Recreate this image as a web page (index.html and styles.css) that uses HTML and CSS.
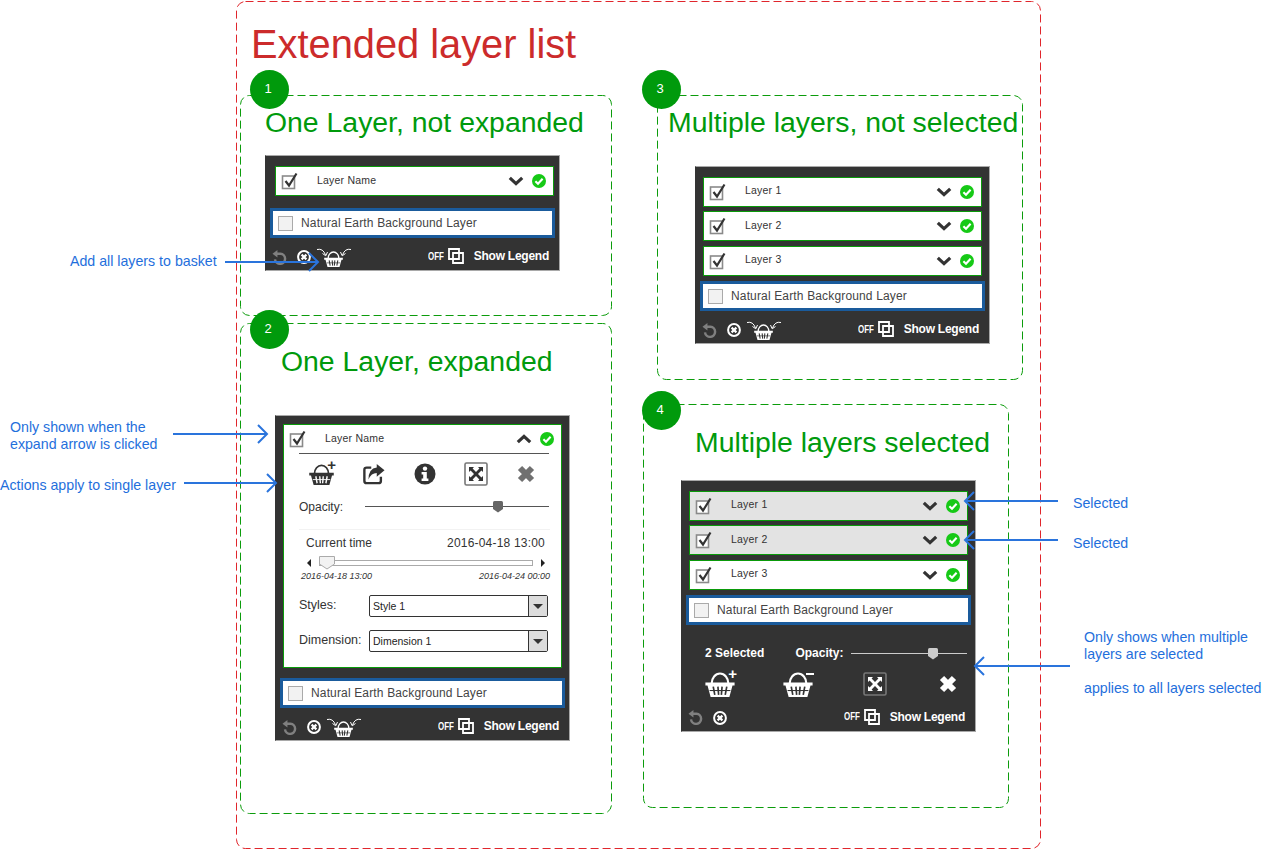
FILE: index.html
```html
<!DOCTYPE html>
<html lang="en">
<head>
  <meta charset="UTF-8">
  <title>Extended layer list</title>
  <link rel="stylesheet" href="styles.css">
</head>
<body>
  <svg class="defs" width="0" height="0">
    <symbol id="i-check" viewBox="0 0 18 18">
      <rect x="1.5" y="4" width="12" height="12.5" fill="#fff" stroke="#8a8a8a" stroke-width="1.6"/>
      <path d="M4.5 9 L8 13.5 L15.5 1.5" fill="none" stroke="#333" stroke-width="2.2"/>
    </symbol>
    <symbol id="i-down" viewBox="0 0 16 10">
      <path d="M1.8 1.8 L8 7.6 L14.2 1.8" fill="none" stroke="#333" stroke-width="3.2"/>
    </symbol>
    <symbol id="i-up" viewBox="0 0 16 10">
      <path d="M1.8 8.2 L8 2.4 L14.2 8.2" fill="none" stroke="#333" stroke-width="3.2"/>
    </symbol>
    <symbol id="i-ok" viewBox="0 0 14 14">
      <circle cx="7" cy="7" r="7" fill="#16c916"/>
      <path d="M3.4 7.2 L6 9.8 L10.6 4.8" fill="none" stroke="#fff" stroke-width="2.1"/>
    </symbol>
    <symbol id="i-undo" viewBox="0 0 16 16">
      <path d="M4.5 4 H9 A5.4 5.4 0 1 1 3.2 10" fill="none" stroke="#808080" stroke-width="2.6"/>
      <path d="M0.5 4 L5.8 0 V8 Z" fill="#808080"/>
    </symbol>
    <symbol id="i-clear" viewBox="0 0 14 14">
      <circle cx="7" cy="7" r="5.9" fill="none" stroke="#fff" stroke-width="2"/>
      <path d="M4.6 4.6 L9.4 9.4 M9.4 4.6 L4.6 9.4" stroke="#fff" stroke-width="2.2"/>
    </symbol>
    <symbol id="i-basket" viewBox="0 0 28 24">
      <path d="M6 11 A8 9.5 0 0 1 22 11" fill="none" stroke="currentColor" stroke-width="2"/>
      <path d="M0 10 H28 V13 H26 L23 24 H5 L2 13 H0 Z" fill="currentColor"/>
      <path d="M7.5 14 L9 22 M12 14 L12.7 22 M16 14 L15.3 22 M20.5 14 L19 22" stroke="var(--hole)" stroke-width="1.6"/>
      <path d="M4 17.8 H24" stroke="var(--hole)" stroke-width="1"/>
    </symbol>
    <symbol id="i-layers" viewBox="0 0 16 16">
      <path d="M1 1 H11 V11 H1 Z M5 5 H15 V15 H5 Z" fill="none" stroke="#fff" stroke-width="1.8"/>
    </symbol>
    <symbol id="i-share" viewBox="0 0 24 22">
      <path d="M9 4 H4 Q1.5 4 1.5 6.5 V18.5 Q1.5 21 4 21 H17 Q19.5 21 19.5 18.5 V14" fill="none" stroke="#333" stroke-width="2.6"/>
      <path d="M15 0 L23.5 7 L15 14 V10 Q9 10 6 17 Q6 5 15 4 Z" fill="#333"/>
    </symbol>
    <symbol id="i-info" viewBox="0 0 22 22">
      <circle cx="11" cy="11" r="10.5" fill="#333"/>
      <circle cx="11" cy="5.6" r="2.2" fill="#fff"/>
      <path d="M7.6 9 H12.8 V15.4 H14.4 V18 H7.6 V15.4 H9.2 V11.4 H7.6 Z" fill="#fff"/>
    </symbol>
    <symbol id="i-extent" viewBox="0 0 24 24">
      <rect x="1" y="1" width="22" height="22" rx="1.5" fill="none" stroke="#777" stroke-width="1.6"/>
      <path d="M5 5 H10 L8.6 6.6 L12 10 L15.4 6.6 L14 5 H19 V10 L17.4 8.6 L14 12 L17.4 15.4 L19 14 V19 H14 L15.4 17.4 L12 14 L8.6 17.4 L10 19 H5 V14 L6.6 15.4 L10 12 L6.6 8.6 L5 10 Z" fill="currentColor"/>
    </symbol>
    <symbol id="i-remove" viewBox="0 0 18 18">
      <path d="M3 3 L15 15 M15 3 L3 15" stroke="currentColor" stroke-width="6"/>
    </symbol>
    <symbol id="i-thumb" viewBox="0 0 10 12">
      <path d="M0 1.5 Q0 0 1.5 0 H8.5 Q10 0 10 1.5 V8 L5 11.5 L0 8 Z" fill="currentColor"/>
    </symbol>
  </svg>

  <div class="stage">
    <svg class="frames" width="1262" height="850">
      <rect class="frame-red" x="236.5" y="1.5" width="804" height="847" rx="9"/>
      <rect class="frame-green" x="240.5" y="95.5" width="371" height="220" rx="9"/>
      <rect class="frame-green" x="240.5" y="323.5" width="371" height="490" rx="9"/>
      <rect class="frame-green" x="657.5" y="95.5" width="365" height="284" rx="9"/>
      <rect class="frame-green" x="643.5" y="404.5" width="365" height="403" rx="9"/>
    </svg>

    <h1 class="title">Extended layer list</h1>

    <div class="step step-1">1</div>
    <div class="step step-2">2</div>
    <div class="step step-3">3</div>
    <div class="step step-4">4</div>

    <h2 class="heading head-1">One Layer, not expanded</h2>
    <h2 class="heading head-2">One Layer, expanded</h2>
    <h2 class="heading head-3">Multiple layers, not selected</h2>
    <h2 class="heading head-4">Multiple layers selected</h2>

    <!-- 1 -->
    <div class="panel panel-1">
      <div class="layer-row">
        <svg class="cb"><use href="#i-check"/></svg>
        <span class="layer-name">Layer Name</span>
        <svg class="chev"><use href="#i-down"/></svg>
        <svg class="ok"><use href="#i-ok"/></svg>
      </div>
      <div class="base-row">
        <span class="empty-cb"></span>
        <span>Natural Earth Background Layer</span>
      </div>
      <div class="panel-foot">
        <svg class="undo"><use href="#i-undo"/></svg>
        <svg class="clear"><use href="#i-clear"/></svg>
        <span class="basket-add">
          <svg class="curl curl-l" viewBox="0 0 11 9"><path d="M0 1.5 Q6 0 8.5 7 M5.5 5.5 L8.8 7.8 L10.5 4"/></svg>
          <svg class="basket-sm"><use href="#i-basket"/></svg>
          <svg class="curl curl-r" viewBox="0 0 11 9"><path d="M11 1.5 Q5 0 2.5 7 M5.5 5.5 L2.2 7.8 L.5 4"/></svg>
        </span>
        <span class="off">OFF</span>
        <svg class="layers"><use href="#i-layers"/></svg>
        <span class="legend">Show Legend</span>
      </div>
    </div>

    <!-- 2 -->
    <div class="panel panel-2">
      <div class="card">
        <div class="card-head">
          <svg class="cb"><use href="#i-check"/></svg>
          <span class="layer-name">Layer Name</span>
          <svg class="chev"><use href="#i-up"/></svg>
          <svg class="ok"><use href="#i-ok"/></svg>
        </div>
        <div class="card-actions">
          <span class="basket-plus">
            <svg class="basket-lg"><use href="#i-basket"/></svg>
            <span class="sign">+</span>
          </span>
          <svg class="act"><use href="#i-share"/></svg>
          <svg class="act"><use href="#i-info"/></svg>
          <svg class="act extent"><use href="#i-extent"/></svg>
          <svg class="act remove"><use href="#i-remove"/></svg>
        </div>
        <div class="opacity-row">
          <span class="opacity-label">Opacity:</span>
          <div class="slider">
            <svg class="thumb thumb-card"><use href="#i-thumb"/></svg>
          </div>
        </div>
        <div class="time-block">
          <div class="time-now">
            <span>Current time</span>
            <span class="time-value">2016-04-18 13:00</span>
          </div>
          <div class="time-slider">
            <span class="tri tri-l"></span>
            <div class="time-track">
              <svg class="time-thumb" viewBox="0 0 16 14"><path d="M.5 .5 H15.5 V8 L8 13 L.5 8 Z"/></svg>
            </div>
            <span class="tri tri-r"></span>
          </div>
          <div class="time-range">
            <span>2016-04-18 13:00</span>
            <span>2016-04-24 00:00</span>
          </div>
        </div>
        <div class="field">
          <span class="field-label">Styles:</span>
          <div class="dropdown"><span class="dropdown-value">Style 1</span><span class="dropdown-btn"></span></div>
        </div>
        <div class="field">
          <span class="field-label">Dimension:</span>
          <div class="dropdown"><span class="dropdown-value">Dimension 1</span><span class="dropdown-btn"></span></div>
        </div>
      </div>
      <div class="base-row">
        <span class="empty-cb"></span>
        <span>Natural Earth Background Layer</span>
      </div>
      <div class="panel-foot">
        <svg class="undo"><use href="#i-undo"/></svg>
        <svg class="clear"><use href="#i-clear"/></svg>
        <span class="basket-add">
          <svg class="curl curl-l" viewBox="0 0 11 9"><path d="M0 1.5 Q6 0 8.5 7 M5.5 5.5 L8.8 7.8 L10.5 4"/></svg>
          <svg class="basket-sm"><use href="#i-basket"/></svg>
          <svg class="curl curl-r" viewBox="0 0 11 9"><path d="M11 1.5 Q5 0 2.5 7 M5.5 5.5 L2.2 7.8 L.5 4"/></svg>
        </span>
        <span class="off">OFF</span>
        <svg class="layers"><use href="#i-layers"/></svg>
        <span class="legend">Show Legend</span>
      </div>
    </div>

    <!-- 3 -->
    <div class="panel panel-3">
      <div class="layer-stack">
        <div class="layer-row">
          <svg class="cb"><use href="#i-check"/></svg>
          <span class="layer-name">Layer 1</span>
          <svg class="chev"><use href="#i-down"/></svg>
          <svg class="ok"><use href="#i-ok"/></svg>
        </div>
        <div class="layer-row">
          <svg class="cb"><use href="#i-check"/></svg>
          <span class="layer-name">Layer 2</span>
          <svg class="chev"><use href="#i-down"/></svg>
          <svg class="ok"><use href="#i-ok"/></svg>
        </div>
        <div class="layer-row">
          <svg class="cb"><use href="#i-check"/></svg>
          <span class="layer-name">Layer 3</span>
          <svg class="chev"><use href="#i-down"/></svg>
          <svg class="ok"><use href="#i-ok"/></svg>
        </div>
      </div>
      <div class="base-row">
        <span class="empty-cb"></span>
        <span>Natural Earth Background Layer</span>
      </div>
      <div class="panel-foot">
        <svg class="undo"><use href="#i-undo"/></svg>
        <svg class="clear"><use href="#i-clear"/></svg>
        <span class="basket-add">
          <svg class="curl curl-l" viewBox="0 0 11 9"><path d="M0 1.5 Q6 0 8.5 7 M5.5 5.5 L8.8 7.8 L10.5 4"/></svg>
          <svg class="basket-sm"><use href="#i-basket"/></svg>
          <svg class="curl curl-r" viewBox="0 0 11 9"><path d="M11 1.5 Q5 0 2.5 7 M5.5 5.5 L2.2 7.8 L.5 4"/></svg>
        </span>
        <span class="off">OFF</span>
        <svg class="layers"><use href="#i-layers"/></svg>
        <span class="legend">Show Legend</span>
      </div>
    </div>

    <!-- 4 -->
    <div class="panel panel-4">
      <div class="layer-stack">
        <div class="layer-row selected">
          <svg class="cb"><use href="#i-check"/></svg>
          <span class="layer-name">Layer 1</span>
          <svg class="chev"><use href="#i-down"/></svg>
          <svg class="ok"><use href="#i-ok"/></svg>
        </div>
        <div class="layer-row selected">
          <svg class="cb"><use href="#i-check"/></svg>
          <span class="layer-name">Layer 2</span>
          <svg class="chev"><use href="#i-down"/></svg>
          <svg class="ok"><use href="#i-ok"/></svg>
        </div>
        <div class="layer-row">
          <svg class="cb"><use href="#i-check"/></svg>
          <span class="layer-name">Layer 3</span>
          <svg class="chev"><use href="#i-down"/></svg>
          <svg class="ok"><use href="#i-ok"/></svg>
        </div>
      </div>
      <div class="base-row">
        <span class="empty-cb"></span>
        <span>Natural Earth Background Layer</span>
      </div>
      <div class="multi">
        <div class="multi-top">
          <span class="multi-count">2 Selected</span>
          <span class="multi-opacity">Opacity:</span>
          <div class="slider slider-light">
            <svg class="thumb thumb-multi"><use href="#i-thumb"/></svg>
          </div>
        </div>
        <div class="multi-actions">
          <span class="basket-plus">
            <svg class="basket-lg"><use href="#i-basket"/></svg>
            <span class="sign">+</span>
          </span>
          <span class="basket-plus">
            <svg class="basket-lg"><use href="#i-basket"/></svg>
            <span class="sign-minus"></span>
          </span>
          <svg class="act extent"><use href="#i-extent"/></svg>
          <svg class="act remove"><use href="#i-remove"/></svg>
        </div>
      </div>
      <div class="panel-foot foot-short">
        <svg class="undo"><use href="#i-undo"/></svg>
        <svg class="clear"><use href="#i-clear"/></svg>
        <span class="off">OFF</span>
        <svg class="layers"><use href="#i-layers"/></svg>
        <span class="legend">Show Legend</span>
      </div>
    </div>

    <p class="note note-basket">Add all layers to basket</p>
    <p class="note note-expand">Only shown when the<br>expand arrow is clicked</p>
    <p class="note note-single">Actions apply to single layer</p>
    <p class="note note-sel-1">Selected</p>
    <p class="note note-sel-2">Selected</p>
    <p class="note note-multi">Only shows when multiple<br>layers are selected</p>
    <p class="note note-all">applies to all layers selected</p>

    <svg class="arrows" width="1262" height="850">
      <path d="M225 262 H318 M309 253 L318 262 L309 271"/>
      <path d="M173 434 H267 M258 425 L267 434 L258 443"/>
      <path d="M184 483 H276 M267 474 L276 483 L267 492"/>
      <path d="M1058 501 H965 M974 492 L965 501 L974 510"/>
      <path d="M1058 540 H965 M974 531 L965 540 L974 549"/>
      <path d="M1070 666 H975 M984 657 L975 666 L984 675"/>
    </svg>
  </div>
</body>
</html>
```

FILE: styles.css
```css
* {
  box-sizing: border-box;
}
body {
  margin: 0;
  background: #fff;
  font-family: "Liberation Sans", Arial, sans-serif;
  color: #333;
}
.defs {
  position: absolute;
}
.stage {
  position: relative;
  width: 1262px;
  height: 850px;
  overflow: hidden;
}
.frames, .arrows {
  position: absolute;
  left: 0;
  top: 0;
  fill: none;
}
.frame-red {
  stroke: #e0262c;
  stroke-dasharray: 8 4;
}
.frame-green {
  stroke: #0c9c0c;
  stroke-dasharray: 8 4;
}
.arrows path {
  stroke: #2a74dc;
  stroke-width: 2;
}

.title {
  position: absolute;
  left: 251px;
  top: 21px;
  margin: 0;
  font-size: 39.8px;
  line-height: 46px;
  font-weight: normal;
  color: #cc2b2b;
}
.step {
  position: absolute;
  width: 39px;
  height: 39px;
  padding-right: 3px;
  border-radius: 50%;
  background: #009a0c;
  color: #fff;
  font-size: 13px;
  line-height: 37px;
  text-align: center;
}
.step-1 { left: 250px; top: 70px; }
.step-2 { left: 250px; top: 310px; }
.step-3 { left: 642px; top: 70px; }
.step-4 { left: 642px; top: 391px; }

.heading {
  position: absolute;
  margin: 0;
  font-size: 28.4px;
  line-height: 32px;
  font-weight: normal;
  color: #009a0c;
  white-space: nowrap;
}
.head-1 { left: 265px; top: 106px; }
.head-2 { left: 281px; top: 345px; }
.head-3 { left: 668px; top: 106px; }
.head-4 { left: 695px; top: 426px; }

.note {
  position: absolute;
  margin: 0;
  font-size: 14.2px;
  line-height: 17px;
  color: #1f6fdc;
  white-space: nowrap;
}
.note-basket { left: 70px; top: 253px; }
.note-expand { left: 10px; top: 419px; }
.note-single { left: 0; top: 477px; }
.note-sel-1 { left: 1073px; top: 495px; }
.note-sel-2 { left: 1073px; top: 535px; }
.note-multi { left: 1084px; top: 629px; }
.note-all { left: 1084px; top: 680px; }

/* layer list widget */
.panel {
  position: absolute;
  width: 295px;
  background: #333;
  border: 1px solid #a9a9a9;
  border-left-color: #333;
  padding-left: 4px;
}
.panel-1 { left: 265px; top: 155px; height: 116px; padding-top: 10px; }
.panel-2 { left: 275px; top: 415px; height: 326px; padding-top: 8px; }
.panel-3 { left: 695px; top: 166px; height: 178px; padding-top: 9.5px; }
.panel-4 { left: 681px; top: 480px; height: 252px; padding-top: 9.5px; }

.layer-row, .card-head {
  display: flex;
  align-items: center;
  height: 30px;
}
.layer-row {
  width: 279px;
  margin-left: 3px;
  background: #fff;
  border: 1px solid #0a9a0a;
}
.panel-1 .layer-row {
  margin-left: 5px;
}
.layer-stack {
  display: flex;
  flex-direction: column;
  gap: 4.5px;
}
.layer-row.selected {
  background: #e3e3e3;
}
.cb {
  flex: none;
  width: 18px;
  height: 18px;
  margin-left: 5px;
}
.layer-name {
  flex: 1;
  margin-left: 18px;
  font-size: 10.5px;
  letter-spacing: 0.2px;
  padding-bottom: 3px;
}
.chev {
  flex: none;
  width: 16px;
  height: 10px;
  margin-right: 8px;
}
.ok {
  flex: none;
  width: 14px;
  height: 14px;
  margin-right: 7px;
}
.base-row {
  display: flex;
  align-items: center;
  width: 285px;
  height: 30px;
  margin-top: 12px;
  background: #fff;
  border: 3px solid #1a5b9c;
  font-size: 12px;
  letter-spacing: 0.15px;
  color: #444;
}
.panel-3 .base-row { margin-top: 5.5px; }
.panel-4 .base-row { margin-top: 5.8px; }
.panel-2 .base-row { margin-top: 10px; }
.empty-cb {
  flex: none;
  width: 15px;
  height: 15px;
  margin: 0 8px 0 5px;
  background: #f2f2f2;
  border: 1px solid #aaa;
}
.panel-foot {
  display: flex;
  align-items: center;
  height: 32px;
  padding: 4px 10px 0 2px;
  color: #fff;
}
.undo {
  flex: none;
  width: 15px;
  height: 15px;
  margin-top: 2px;
}
.clear {
  flex: none;
  width: 14px;
  height: 14px;
  margin: 2px 0 0 10px;
}
.basket-add {
  display: flex;
  align-items: flex-start;
  height: 20px;
  margin: 3px 0 0 6px;
  --hole: #333;
}
.basket-sm {
  width: 19px;
  height: 16px;
  margin-top: 3px;
}
.curl {
  flex: none;
  width: 11px;
  height: 9px;
  fill: none;
  stroke: #fff;
  stroke-width: 1;
}
.curl-l { margin-right: -4px; }
.curl-r { margin-left: -3px; }
.off {
  margin-left: auto;
  font-size: 10px;
  font-weight: bold;
  transform: scaleX(0.8);
}
.layers {
  flex: none;
  width: 16px;
  height: 16px;
  margin-left: 2px;
}
.legend {
  margin-left: 10px;
  font-size: 12px;
  font-weight: bold;
  letter-spacing: -0.25px;
}

/* expanded card */
.card {
  width: 279px;
  height: 244px;
  margin-left: 3px;
  padding: 0 12px 0 15px;
  background: #fff;
  border: 1px solid #0a9a0a;
}
.card-head {
  margin: 0 -12px 0 -15px;
  height: 28px;
}
.card-actions {
  display: flex;
  align-items: center;
  justify-content: space-between;
  height: 37px;
  padding: 3px 14px 0 10px;
  border-top: 1px solid #555;
  color: #333;
  --hole: #fff;
}
.basket-plus {
  position: relative;
  display: block;
  flex: none;
  width: 25px;
  height: 23px;
}
.basket-lg {
  position: absolute;
  left: 0;
  bottom: 0;
  width: 25px;
  height: 21px;
}
.sign {
  position: absolute;
  right: -2px;
  top: -5px;
  font-size: 15px;
  font-weight: bold;
  line-height: 15px;
}
.sign-minus {
  position: absolute;
  top: 2px;
  right: -1px;
  width: 8px;
  height: 2px;
  background: #fff;
}
.act {
  flex: none;
  width: 22px;
  height: 22px;
}
.extent {
  width: 24px;
  height: 24px;
}
.remove {
  width: 18px;
  height: 18px;
  color: #707070;
}
.opacity-row {
  display: flex;
  align-items: center;
  height: 40px;
  padding-bottom: 6px;
  margin-right: -1px;
  font-size: 12px;
  border-bottom: 1px solid #f2f2f2;
}
.opacity-label {
  width: 66px;
}
.slider {
  position: relative;
  flex: 1;
  height: 1px;
  background: #555;
  margin-right: 1px;
}
.thumb {
  position: absolute;
  top: -5px;
  width: 10px;
  height: 12px;
  color: #666;
}
.thumb-card { left: 128px; }
.thumb-multi { left: 77px; color: #ccc; }
.slider-light {
  flex: none;
  width: 116px;
  margin-left: 8px;
  background: #ccc;
}
.time-block {
  margin-left: -2px;
}
.time-now {
  display: flex;
  justify-content: space-between;
  padding: 6px 4px 0 9px;
  font-size: 12px;
  line-height: 15px;
}
.time-value {
  letter-spacing: 0.2px;
}
.time-slider {
  display: flex;
  align-items: center;
  height: 14px;
  margin-top: 5px;
  padding: 0 4px 0 10px;
}
.tri {
  flex: none;
  width: 0;
  height: 0;
  border-top: 4px solid transparent;
  border-bottom: 4px solid transparent;
}
.tri-l { border-right: 4px solid #222; }
.tri-r { border-left: 4px solid #222; }
.time-track {
  position: relative;
  flex: 1;
  height: 6px;
  margin: 0 8px;
  background: #fff;
  border: 1px solid #aaa;
}
.time-thumb {
  position: absolute;
  left: -1px;
  top: -5px;
  width: 16px;
  height: 14px;
  fill: #f2f2f2;
  stroke: #aaa;
}
.time-range {
  display: flex;
  justify-content: space-between;
  padding-left: 4px;
  font-size: 9px;
  font-style: italic;
  line-height: 12px;
  margin-right: -1px;
}
.field {
  display: flex;
  align-items: center;
  height: 22px;
  margin-top: 13px;
  font-size: 12.5px;
}
.field-label {
  width: 70px;
  padding-bottom: 3px;
}
.dropdown {
  display: flex;
  width: 179px;
  height: 22px;
  border: 1px solid #333;
  border-radius: 2px;
  font-size: 10.5px;
  color: #222;
}
.dropdown-value {
  flex: 1;
  padding-left: 3px;
  line-height: 21px;
}
.dropdown-btn {
  position: relative;
  width: 19px;
  background: #dcdcdc;
  border-left: 1px solid #333;
}
.dropdown-btn::after {
  content: "";
  position: absolute;
  left: 4px;
  top: 8px;
  border-left: 5px solid transparent;
  border-right: 5px solid transparent;
  border-top: 5px solid #333;
}

/* multi selection bar */
.multi {
  height: 71px;
  margin: 6px 0 0 -4px;
  padding: 12px 0 0 23px;
  color: #fff;
  white-space: nowrap;
}
.multi-top {
  display: flex;
  align-items: center;
  height: 20px;
  font-size: 12px;
  font-weight: bold;
}
.multi-opacity {
  margin-left: 31px;
}
.multi-actions {
  display: flex;
  align-items: center;
  height: 32px;
  margin-top: 5px;
  --hole: #333;
}
.multi-actions .basket-plus {
  width: 30px;
  height: 26px;
  margin-right: 48px;
}
.multi-actions .basket-plus + .basket-plus {
  margin-right: 50px;
}
.multi-actions .basket-lg {
  width: 30px;
  height: 25px;
}
.multi-actions .extent {
  color: #fff;
  margin-right: 52px;
}
.multi-actions .remove {
  color: #fff;
}
.foot-short {
  height: 29px;
  padding-top: 0;
}
```
